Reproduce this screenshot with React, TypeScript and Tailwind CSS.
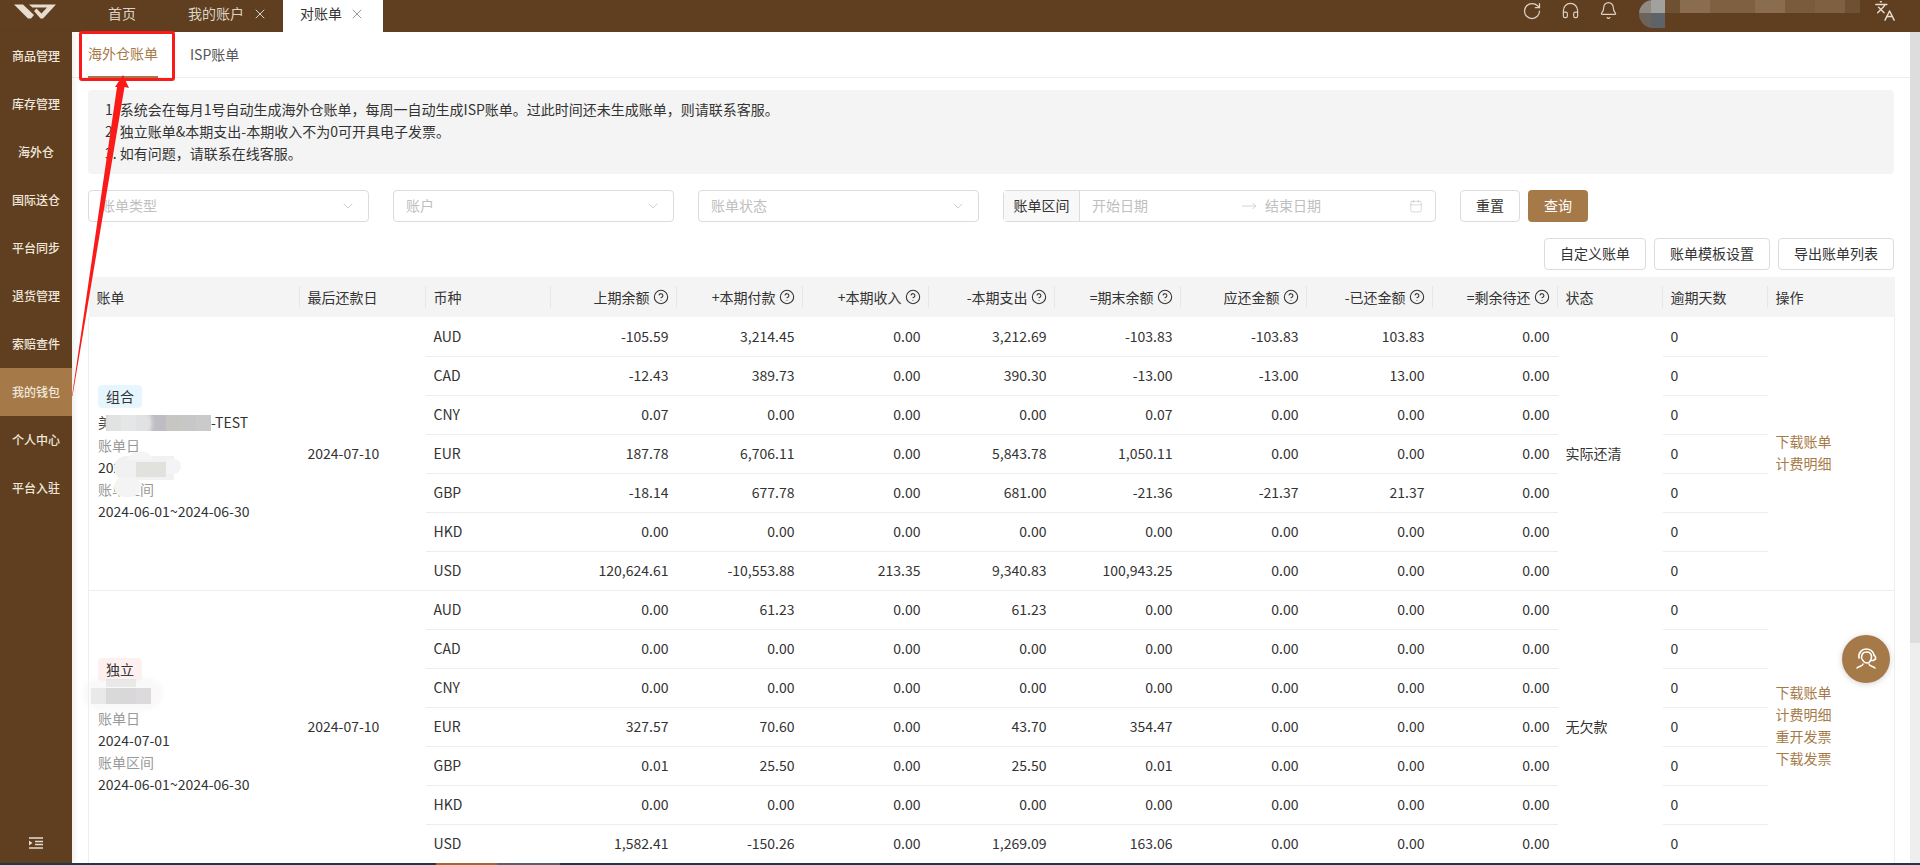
import { Bell, Calendar, ChevronDown, CircleHelp, Headphones, Languages, MoveRight, RotateCw, X } from 'lucide-react';

const MENU = ['商品管理', '库存管理', '海外仓', '国际送仓', '平台同步', '退货管理', '索赔查件', '我的钱包', '个人中心', '平台入驻'];

const COLUMNS = [
  { label: '账单', width: 211 },
  { label: '最后还款日', width: 126 },
  { label: '币种', width: 125 },
  { label: '上期余额', width: 126, help: true },
  { label: '+本期付款', width: 126, help: true },
  { label: '+本期收入', width: 126, help: true },
  { label: '-本期支出', width: 126, help: true },
  { label: '=期末余额', width: 126, help: true },
  { label: '应还金额', width: 126, help: true },
  { label: '-已还金额', width: 126, help: true },
  { label: '=剩余待还', width: 125, help: true },
  { label: '状态', width: 105 },
  { label: '逾期天数', width: 105 },
  { label: '操作', width: 127 },
];

const Z = '0.00';

const GROUPS = [
  {
    kind: '组合',
    dueDate: '2024-07-10',
    status: '实际还清',
    actions: ['下载账单', '计费明细'],
    rows: [
      ['AUD', '-105.59', '3,214.45', Z, '3,212.69', '-103.83', '-103.83', '103.83', Z],
      ['CAD', '-12.43', '389.73', Z, '390.30', '-13.00', '-13.00', '13.00', Z],
      ['CNY', '0.07', Z, Z, Z, '0.07', Z, Z, Z],
      ['EUR', '187.78', '6,706.11', Z, '5,843.78', '1,050.11', Z, Z, Z],
      ['GBP', '-18.14', '677.78', Z, '681.00', '-21.36', '-21.37', '21.37', Z],
      ['HKD', Z, Z, Z, Z, Z, Z, Z, Z],
      ['USD', '120,624.61', '-10,553.88', '213.35', '9,340.83', '100,943.25', Z, Z, Z],
    ],
  },
  {
    kind: '独立',
    dueDate: '2024-07-10',
    status: '无欠款',
    actions: ['下载账单', '计费明细', '重开发票', '下载发票'],
    rows: [
      ['AUD', Z, '61.23', Z, '61.23', Z, Z, Z, Z],
      ['CAD', Z, Z, Z, Z, Z, Z, Z, Z],
      ['CNY', Z, Z, Z, Z, Z, Z, Z, Z],
      ['EUR', '327.57', '70.60', Z, '43.70', '354.47', Z, Z, Z],
      ['GBP', '0.01', '25.50', Z, '25.50', '0.01', Z, Z, Z],
      ['HKD', Z, Z, Z, Z, Z, Z, Z, Z],
      ['USD', '1,582.41', '-150.26', Z, '1,269.09', '163.06', Z, Z, Z],
    ],
  },
];

function Select({ placeholder }: { placeholder: string }) {
  return (
    <div className="flex h-8 w-[281px] items-center justify-between rounded-sm border border-[#dcdcdc] bg-white px-3">
      <span className="pb-px text-[#c0c0c0]">{placeholder}</span>
      <ChevronDown size={16} strokeWidth={1} className="text-[#b5b5b5]" />
    </div>
  );
}

function OutlineButton({ label, width }: { label: string; width: string }) {
  return (
    <button className={`h-8 rounded-sm border border-[#dcdcdc] bg-white pb-px text-[#333] ${width}`}>{label}</button>
  );
}

function Mosaic({ colors }: { colors: string[] }) {
  return (
    <span className="relative inline-flex h-[16px] align-middle">
      {colors.map((c, idx) => (
        <span key={idx} className="h-full w-[15px]" style={{ backgroundColor: c }} />
      ))}
    </span>
  );
}

function BillLines() {
  return (
    <>
      <div className="leading-[22px] text-[#999]">账单日</div>
      <div className="leading-[22px]">2024-07-01</div>
      <div className="leading-[22px] text-[#999]">账单区间</div>
      <div className="leading-[22px]">2024-06-01~2024-06-30</div>
    </>
  );
}

function BillCell({ kind }: { kind: string }) {
  if (kind === '组合') {
    return (
      <div className="relative pl-[9px]">
        <span className="block h-[23px] w-11 rounded-sm bg-[#e6f6fe] text-center leading-[22px]">组合</span>
        <div className="mt-1 flex h-[22px] items-center">
          <span>美</span>
          <span className="-ml-[6px] flex">
            <Mosaic colors={['#c6c5c5', '#c9ccd0', '#c5c5c6', '#bebdc4', '#c8c6c3', '#c7c7c8', '#cbcaca']} />
          </span>
          <span>-TEST</span>
        </div>
        <BillLines />
        <div className="absolute left-[15px] top-[24px] h-[30px] w-[48px] rounded-[14px] bg-white/50 blur-[2px]" />
        <div className="absolute left-[25px] top-[71px] h-[24px] w-[60px] rounded-l-[12px] bg-[#f1f1f1]" />
        <div className="absolute left-[25px] top-[92px] h-[20px] w-[27px] rounded-[10px] bg-[#f4f4f4]" />
        <div className="absolute left-[39px] top-[67px] h-[8px] w-[24px] rounded-t-[8px] bg-[#f5f5f5]" />
        <div className="absolute left-[47px] top-[77px] h-[15px] w-[30px] bg-[#e1e1dd]" />
        <div className="absolute left-[77px] top-[74px] h-[15px] w-[15px] rounded-r-[8px] bg-[#f3f3f8]" />
      </div>
    );
  }
  return (
    <div className="relative pl-[9px]">
      <span className="block h-[23px] w-11 rounded-sm bg-[#fdf0ef] text-center leading-[22px]">独立</span>
      <div className="mt-1 -ml-[7px] flex h-[22px] items-center">
        <Mosaic colors={['#e0dfdf', '#c0bfc0', '#bdbdc2', '#c4c1c0']} />
      </div>
      <BillLines />
      <div className="absolute left-[17px] top-[21px] h-[8px] w-[30px] bg-[#dedede]" />
      <div className="absolute -left-[6px] top-[20px] h-[32px] w-[80px] rounded-full bg-[#f4f4f4]/50 blur-[2px]" />
    </div>
  );
}

function BillTable() {
  return (
    <table className="mt-[7px] w-[1806px] table-fixed border-collapse text-[#333]">
      <colgroup>
        {COLUMNS.map((c) => (
          <col key={c.label} style={{ width: c.width }} />
        ))}
      </colgroup>
      <thead>
        <tr className="h-10 bg-[#f4f4f4]">
          {COLUMNS.map((c, idx) => (
            <th key={c.label} className="p-0 font-normal">
              <div
                className={`flex h-[22px] items-center gap-[3px] px-2 ${c.help ? 'justify-end' : ''} ${
                  idx < COLUMNS.length - 1 ? 'border-r border-[#e6e6e6]' : ''
                }`}
              >
                <span>{c.label}</span>
                {c.help && <CircleHelp size={16} strokeWidth={1.6} className="-mr-px shrink-0 text-[#333]" />}
              </div>
            </th>
          ))}
        </tr>
      </thead>
      <tbody>
        {GROUPS.map((group) =>
          group.rows.map((row, rowIdx) => (
            <tr key={group.kind + row[0]} className="h-[39px]">
              {rowIdx === 0 && (
                <>
                  <td rowSpan={7} className="border-b border-l border-[#eeeeee] p-0">
                    <BillCell kind={group.kind} />
                  </td>
                  <td rowSpan={7} className="border-b border-[#eeeeee] px-2">
                    {group.dueDate}
                  </td>
                </>
              )}
              <td className="border-b border-[#eeeeee] px-2">{row[0]}</td>
              {row.slice(1).map((value, idx) => (
                <td key={idx} className="border-b border-[#eeeeee] px-2 text-right">
                  {value}
                </td>
              ))}
              {rowIdx === 0 && (
                <td rowSpan={7} className="border-b border-[#eeeeee] px-2">
                  {group.status}
                </td>
              )}
              <td className="border-b border-[#eeeeee] px-2">0</td>
              {rowIdx === 0 && (
                <td rowSpan={7} className="border-b border-r border-[#eeeeee] px-2 text-[#a67a48]">
                  <div className="pb-[3px]">
                    {group.actions.map((a) => (
                      <div key={a} className="leading-[22px]">
                        {a}
                      </div>
                    ))}
                  </div>
                </td>
              )}
            </tr>
          ))
        )}
      </tbody>
    </table>
  );
}

export default function App() {
  return (
    <div className="relative flex h-screen w-full flex-col overflow-hidden bg-white text-[14px] font-['Noto_Sans_CJK_SC','Noto_Sans',sans-serif]">
      {/* Top bar */}
      <header className="flex h-8 shrink-0 items-start bg-[#5f3f1f] text-[#dcd2c6]">
        <div className="flex w-[72px] shrink-0 pl-[14px] pt-1">
          <svg width="42" height="15" viewBox="0 0 42 15" fill="#e6dccf" fillRule="evenodd">
            <path d="M0 0.500h9l11 10.500-3 3.500h-3z" />
            <path d="M15 0.500h27l-13 14h-2.500l-6.500-7.500 2.500-2.500 5 5 5.500-6h-14.500z" />
          </svg>
        </div>
        <span className="ml-9 pt-[3px]">首页</span>
        <span className="ml-[52px] pt-[3px]">我的账户</span>
        <X size={16} strokeWidth={1.5} className="ml-2 mt-[6px]" />
        <div className="ml-[15px] flex h-8 w-[100px] items-start bg-white pl-[17px] pt-[3px] text-[#333]">
          对账单
          <X size={16} strokeWidth={1.5} className="ml-[7px] mt-[3px] text-[#999]" />
        </div>
        <div className="ml-auto flex items-start">
          <RotateCw size={20} strokeWidth={1.5} className="mt-[1px]" />
          <Headphones size={19} strokeWidth={1.5} className="ml-[19px] mt-[1px]" />
          <Bell size={19} strokeWidth={1.5} className="ml-[19px] mt-[1px]" />
          <div className="ml-[21px] flex h-7 w-[222px] items-start">
            <div className="flex h-full w-[26px] flex-wrap overflow-hidden rounded-l-full">
              <div className="h-[13px] w-[12px] bg-[#8f8a83]" />
              <div className="h-[13px] w-[14px] bg-[#a3a19d]" />
              <div className="h-[15px] w-[12px] bg-[#6c635b]" />
              <div className="h-[15px] w-[14px] bg-[#5e6369]" />
            </div>
            <div className="h-[13px] w-[15px] bg-[#6e5033]" />
            <div className="h-[13px] w-[30px] bg-[#8a6d4f]" />
            <div className="h-[13px] w-[45px] bg-[#7f6142]" />
            <div className="h-[13px] w-[30px] bg-[#8a6d4f]" />
            <div className="h-[13px] w-[30px] bg-[#7a5c3d]" />
            <div className="h-[13px] w-[30px] bg-[#7f6142]" />
            <div className="h-[13px] w-[15px] bg-[#6e5033]" />
          </div>
          <Languages size={22} strokeWidth={1.6} className="ml-[13px] mr-[24px] text-[#e6dccf]" />
        </div>
      </header>

      <div className="flex min-h-0 flex-1">
        {/* Sidebar */}
        <aside className="z-10 flex w-[72px] shrink-0 flex-col bg-[#5f3f1f] shadow-[2px_0_6px_rgba(0,0,0,0.08)]">
          {MENU.map((item) => (
            <div
              key={item}
              className={`flex h-12 items-center justify-center pb-px text-[12px] font-medium text-[#efe7dc] ${
                item === '我的钱包' ? 'bg-[#a67a48]' : ''
              }`}
            >
              {item}
            </div>
          ))}
          <div className="mt-auto flex justify-center pb-[14px]">
            <svg width="14" height="12" viewBox="0 0 14 12" fill="none" stroke="#e6dccf">
              <path d="M0 1h14M6 4.500h8M6 7.500h8M0 11h14" strokeWidth="1.500" />
              <path d="M0 3.500l3.500 2.500L0 8.500z" fill="#e6dccf" stroke="none" />
            </svg>
          </div>
        </aside>

        {/* Main */}
        <main className="min-w-0 flex-1 overflow-hidden">
          <div className="flex h-[46px] items-end gap-8 border-b border-[#eeeeee] px-4">
            <div className="-mb-px flex h-[46px] w-[70px] items-center justify-center border-b-2 border-[#a67a48] pb-px text-[#a67a48]">
              海外仓账单
            </div>
            <div className="flex h-[45px] items-center pb-px text-[#555]">ISP账单</div>
          </div>

          <div className="px-4">
            <div className="mt-3 rounded-sm bg-[#f4f4f4] pb-[10px] pl-[17px] pt-2 leading-[22px] text-[#333]">
              <p>1. 系统会在每月1号自动生成海外仓账单，每周一自动生成ISP账单。过此时间还未生成账单，则请联系客服。</p>
              <p>2. 独立账单&本期支出-本期收入不为0可开具电子发票。</p>
              <p>3. 如有问题，请联系在线客服。</p>
            </div>

            <div className="mt-4 flex">
              <Select placeholder="账单类型" />
              <div className="ml-6">
                <Select placeholder="账户" />
              </div>
              <div className="ml-6">
                <Select placeholder="账单状态" />
              </div>
              <div className="ml-6 flex h-8 w-[433px] rounded-sm border border-[#dcdcdc]">
                <div className="flex w-[76px] items-center justify-center border-r border-[#dcdcdc] bg-[#f8f8f8] pb-px text-[#333]">
                  账单区间
                </div>
                <div className="flex flex-1 items-center px-3 text-[#c0c0c0]">
                  <span className="pb-px">开始日期</span>
                  <MoveRight size={16} strokeWidth={1} className="ml-[93px]" />
                  <span className="ml-[8px] pb-px">结束日期</span>
                  <Calendar size={14} strokeWidth={1} className="ml-auto" />
                </div>
              </div>
              <div className="ml-6">
                <OutlineButton label="重置" width="w-[60px]" />
              </div>
              <button className="ml-2 h-8 w-[60px] rounded-sm bg-[#a67a48] pb-px text-white">查询</button>
            </div>

            <div className="mt-4 flex justify-end gap-2">
              <OutlineButton label="自定义账单" width="w-[102px]" />
              <OutlineButton label="账单模板设置" width="w-[116px]" />
              <OutlineButton label="导出账单列表" width="w-[116px]" />
            </div>

            <BillTable />
          </div>
        </main>

        {/* Scrollbar */}
        <div className="flex w-[10px] shrink-0 flex-col bg-[#eeeeee]">
          <div className="h-[611px] bg-[#dddddd]" />
        </div>
      </div>

      {/* Task strip at the very bottom */}
      <div className="z-20 flex h-[2px] shrink-0 bg-[#1e3a4a]">
        <div className="ml-[436px] w-[61px] bg-[#a9652f]" />
        <div className="w-[63px] bg-[#56636b]" />
      </div>

      {/* Floating service button */}
      <div className="absolute left-[1842px] top-[635px] z-20 flex h-12 w-12 items-center justify-center rounded-full bg-[#a67a48] shadow-[0_1px_6px_rgba(0,0,0,0.18)]">
        <svg width="26" height="26" viewBox="0 0 26 26" fill="none" stroke="#fff" strokeWidth="1.600" strokeLinecap="round">
          <path d="M6 12c-1-5 3-9 7-9s7 2 8 6" />
          <path d="M8.500 12c0-4 2-6 5-6s5 2 5 5c0 3-2 6-4.500 6s-4-2-5-4" />
          <path d="M21 9l1.500 2v2l-2 1.500h-3" />
          <path d="M10 18c0 2-4 2-6 4M16 18c0 2 4 2 6 4" />
        </svg>
      </div>

      {/* Annotation over the screenshot */}
      <div className="absolute left-[79px] top-[31px] z-30 h-[50px] w-[96px] rounded-[3px] border-[3px] border-[#fb1a1a]" />
      <svg className="absolute left-0 top-0 z-30" width="200" height="420" viewBox="0 0 200 420" fill="#fb1a1a">
        <path d="M123 75 L129 88 L124.500 87 L72.500 396 L72 396 L117 87 L115 87 Z" />
      </svg>
    </div>
  );
}
